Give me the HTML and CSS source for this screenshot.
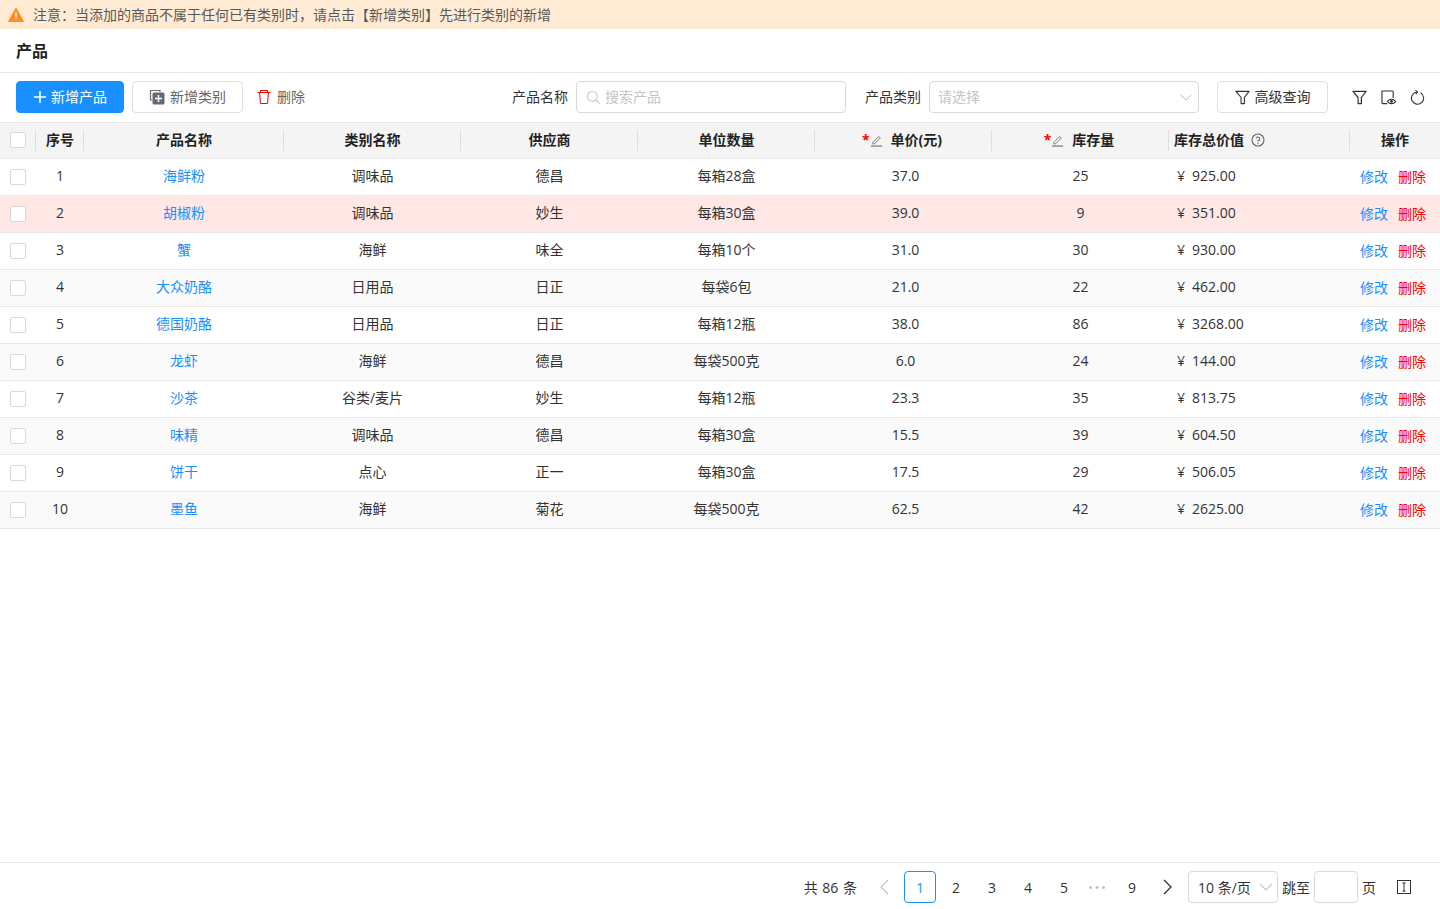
FILE: index.html
```html
<!DOCTYPE html>
<html lang="zh-CN">
<head>
    <meta charset="UTF-8">
    <meta name="viewport" content="width=device-width, initial-scale=1.0">
    <title>产品</title>
    <link rel="stylesheet" href="styles.css">
</head>
<body>
    <div class="notice">
        <svg class="notice-icon" viewBox="0 0 16 16" width="16" height="16"><path d="M8 1.2 15.4 14.4H.6Z" fill="#ff8c1a" stroke="#ff8c1a" stroke-linejoin="round"/><path d="M8 5.6v4.6M8 11.4v1.2" stroke="#fff" stroke-width="1.4"/></svg>
        <span>注意：当添加的商品不属于任何已有类别时，请点击【新增类别】先进行类别的新增</span>
    </div>
    <div class="title-bar">产品</div>
    <div class="toolbar">
        <button class="btn btn-primary"><svg viewBox="0 0 14 14" width="14" height="14"><path d="M7 1v12M1 7h12" stroke="#fff" stroke-width="1.6"/></svg>新增产品</button>
        <button class="btn btn-default"><svg viewBox="0 0 16 16" width="16" height="16"><path d="M11 3V1.500H1.500v9.500H3" fill="none" stroke="#666b73" stroke-width="1.2"/><rect x="3.500" y="3.500" width="12" height="12" rx="1.500" fill="#666b73"/><path d="M9.500 6v7M6 9.500h7" stroke="#fff" stroke-width="1.500"/></svg>新增类别</button>
        <button class="btn btn-text"><svg viewBox="0 0 14 16" width="14" height="16"><path d="M.5 3.500h13M2.500 3.500l1 11h7l1-11M3.500 3.500V1.500h7v2" fill="none" stroke="#f00" stroke-width="1"/></svg>删除</button>
        <label class="field-label field-name">产品名称</label>
        <div class="input search-input">
            <svg viewBox="0 0 16 16" width="15" height="15"><circle cx="6.800" cy="6.800" r="5.200" fill="none" stroke="#c4c4c4" stroke-width="1.100"/><path d="m10.600 10.600 4 4" stroke="#c4c4c4" stroke-width="1.100"/></svg>
            <span>搜索产品</span>
        </div>
        <label class="field-label field-type">产品类别</label>
        <div class="input select-input">
            <span>请选择</span>
            <svg viewBox="0 0 14 8" width="12" height="7"><path d="m1 1 6 6 6-6" fill="none" stroke="#c9c9c9" stroke-width="1.200"/></svg>
        </div>
        <button class="btn btn-default btn-query"><svg viewBox="0 0 16 16" width="15" height="15"><path d="M1 1.500h14L10 8v6.500H6.500V8Z" fill="none" stroke="#333" stroke-width="1.200" stroke-linejoin="round"/></svg>高级查询</button>
        <div class="tool-icons">
            <svg viewBox="0 0 16 16" width="15" height="15"><path d="M1 1.500h14L10 8v6.500H6.500V8Z" fill="none" stroke="#333" stroke-width="1.300" stroke-linejoin="round"/></svg>
            <svg viewBox="0 0 16 16" width="15" height="15"><path d="M6.500 14.500H2a1 1 0 0 1-1-1V1h11a1 1 0 0 1 1 1v6.500" fill="none" stroke="#333" stroke-width="1.200"/><path d="M6.800 12.300c2.400-3.200 6.400-3.200 8.800 0-2.400 3-6.400 3-8.800 0Z" fill="none" stroke="#333" stroke-width="1.200"/><circle cx="11.200" cy="12.200" r="1.500" fill="#333"/></svg>
            <svg viewBox="0 0 16 16" width="15" height="15"><path d="M11.200 3A6.500 6.500 0 1 1 7.500 2.200" fill="none" stroke="#333" stroke-width="1.200"/><path d="M5.800 .3 8 2.200 6 4.300" fill="none" stroke="#333" stroke-width="1.200"/></svg>
        </div>
    </div>
    <div class="table">
        <div class="row head-row">
            <div class="cell col-check"><span class="checkbox"></span></div>
            <div class="cell col-no">序号</div>
            <div class="cell col-name">产品名称</div>
            <div class="cell col-md">类别名称</div>
            <div class="cell col-md">供应商</div>
            <div class="cell col-md">单位数量</div>
            <div class="cell col-md col-edit"><span class="edit-mark">*<svg viewBox="0 0 14 14" width="13" height="13"><path d="M3 9.200 9.400 2.600l1.800 1.700-6.500 6.500H3Z" fill="none" stroke="#777" stroke-width="1"/><path d="M1 13h12" stroke="#777" stroke-width="1.300"/></svg></span>单价(元)</div>
            <div class="cell col-md col-edit"><span class="edit-mark">*<svg viewBox="0 0 14 14" width="13" height="13"><path d="M3 9.200 9.400 2.600l1.800 1.700-6.500 6.500H3Z" fill="none" stroke="#777" stroke-width="1"/><path d="M1 13h12" stroke="#777" stroke-width="1.300"/></svg></span>库存量</div>
            <div class="cell col-total">库存总价值<svg class="help-icon" viewBox="0 0 14 14" width="14" height="14"><circle cx="7" cy="7" r="6" fill="none" stroke="#666" stroke-width="1.100"/><path d="M5.200 5.500A1.800 1.800 0 1 1 7 7.600v1" fill="none" stroke="#666" stroke-width="1.100"/><circle cx="7" cy="10.300" r=".7" fill="#666"/></svg></div>
            <div class="cell col-action">操作</div>
        </div>
        <div id="rows"></div>
    </div>
    <div class="pager">
        <span class="total">共 86 条</span>
        <svg class="arrow" viewBox="0 0 10 16" width="10" height="16"><path d="M9 1 2 8l7 7" fill="none" stroke="#c4c4c4" stroke-width="1.300"/></svg>
        <span class="page current">1</span>
        <span class="page">2</span>
        <span class="page">3</span>
        <span class="page">4</span>
        <span class="page">5</span>
        <span class="dots">•••</span>
        <span class="page">9</span>
        <svg class="arrow arrow-next" viewBox="0 0 10 16" width="10" height="16"><path d="m1 1 7 7-7 7" fill="none" stroke="#333" stroke-width="1.300"/></svg>
        <div class="size-select">10 条/页<svg viewBox="0 0 14 8" width="14" height="8"><path d="m1 1 6 6 6-6" fill="none" stroke="#c4c4c4" stroke-width="1.100"/></svg></div>
        <span class="jump">跳至</span>
        <div class="jump-input"></div>
        <span class="jump-unit">页</span>
        <svg class="density" viewBox="0 0 14 14" width="14" height="14"><rect x=".5" y=".5" width="13" height="13" fill="none" stroke="#333"/><path d="M7 2.500v9M5.500 3h3M5.500 11h3" fill="none" stroke="#333"/></svg>
    </div>
    <script>
        const products = [
            [1, '海鲜粉', '调味品', '德昌', '每箱28盒', '37.0', 25, '925.00', ''],
            [2, '胡椒粉', '调味品', '妙生', '每箱30盒', '39.0', 9, '351.00', 'warn'],
            [3, '蟹', '海鲜', '味全', '每箱10个', '31.0', 30, '930.00', ''],
            [4, '大众奶酪', '日用品', '日正', '每袋6包', '21.0', 22, '462.00', 'alt'],
            [5, '德国奶酪', '日用品', '日正', '每箱12瓶', '38.0', 86, '3268.00', ''],
            [6, '龙虾', '海鲜', '德昌', '每袋500克', '6.0', 24, '144.00', 'alt'],
            [7, '沙茶', '谷类/麦片', '妙生', '每箱12瓶', '23.3', 35, '813.75', ''],
            [8, '味精', '调味品', '德昌', '每箱30盒', '15.5', 39, '604.50', 'alt'],
            [9, '饼干', '点心', '正一', '每箱30盒', '17.5', 29, '506.05', ''],
            [10, '墨鱼', '海鲜', '菊花', '每袋500克', '62.5', 42, '2625.00', 'alt']
        ];
        document.getElementById('rows').innerHTML = products.map(p => `
            <div class="row ${p[8]}">
                <div class="cell col-check"><span class="checkbox"></span></div>
                <div class="cell col-no">${p[0]}</div>
                <div class="cell col-name"><a href="#">${p[1]}</a></div>
                <div class="cell col-md">${p[2]}</div>
                <div class="cell col-md">${p[3]}</div>
                <div class="cell col-md">${p[4]}</div>
                <div class="cell col-md col-price">${p[5]}</div>
                <div class="cell col-md">${p[6]}</div>
                <div class="cell col-total"><span class="yen">¥</span>${p[7]}</div>
                <div class="cell col-action"><a href="#">修改</a><a href="#" class="del">删除</a></div>
            </div>`).join('');
    </script>
</body>
</html>
```

FILE: styles.css
```css
* {
    box-sizing: border-box;
}
body {
    font-family: "Open Sans", "Noto Sans CJK SC", sans-serif;
    font-size: 14px;
    color: #333;
    background-color: #fff;
    margin: 0;
    height: 909px;
    display: flex;
    flex-direction: column;
    overflow: hidden;
}
.notice {
    display: flex;
    align-items: center;
    height: 29px;
    padding-left: 8px;
    background-color: #ffebd4;
    color: #595959;
    font-size: 14px;
}
.notice span {
    padding-bottom: 2px;
}
.notice-icon {
    margin-right: 9px;
}
.title-bar {
    height: 44px;
    padding-left: 16px;
    line-height: 44px;
    font-size: 16px;
    font-weight: 700;
    color: #222;
    border-bottom: 1px solid #e8e8e8;
}
.toolbar {
    display: flex;
    align-items: center;
    height: 49px;
    padding: 0 0 1px 16px;
}
.btn {
    display: flex;
    align-items: center;
    justify-content: center;
    height: 32px;
    padding: 0 0 2px;
    border-radius: 4px;
    border: 1px solid #dcdfe6;
    background-color: #fff;
    font-family: inherit;
    font-size: 14px;
    color: #666;
}
.btn svg {
    margin-top: 2px;
}
.btn-primary {
    width: 108px;
    background-color: #1890ff;
    border-color: #1890ff;
    color: #fff;
    gap: 4px;
}
.btn-default {
    width: 111px;
    margin-left: 8px;
    gap: 5px;
}
.btn-text {
    margin-left: 14px;
    border: none;
    gap: 6px;
}
.field-label {
    color: #333;
    font-size: 14px;
    padding-bottom: 2px;
}
.field-name {
    margin-left: auto;
}
.field-type {
    margin-left: 19px;
}
.input {
    display: flex;
    align-items: center;
    height: 32px;
    margin-left: 8px;
    padding-bottom: 2px;
    border: 1px solid #d9d9d9;
    border-radius: 4px;
    color: #c4c4c4;
    font-size: 14px;
}
.input svg {
    margin-top: 2px;
}
.search-input {
    width: 270px;
    padding-left: 9px;
    gap: 4px;
}
.select-input {
    width: 270px;
    padding-left: 8px;
    padding-right: 6px;
    justify-content: space-between;
}
.btn-query {
    margin-left: 18px;
    color: #333;
}
.tool-icons {
    display: flex;
    align-items: center;
    gap: 14px;
    margin: 0 15px 0 24px;
}
.table {
    flex: 1;
}
.row {
    display: flex;
    height: 37px;
    border-bottom: 1px solid #e8e8e8;
}
.row.warn {
    background-color: #fee7e5;
}
.row.alt {
    background-color: #fafafa;
}
.cell {
    display: flex;
    align-items: center;
    justify-content: center;
    position: relative;
    flex-shrink: 0;
    padding-bottom: 4px;
    color: #333;
}
.cell.col-check {
    padding-bottom: 0;
}
.col-check {
    width: 36px;
}
.col-no {
    width: 48px;
}
.col-name {
    width: 200px;
}
.col-md {
    width: 177px;
}
.col-price {
    padding-left: 4px;
}
.col-total {
    width: 181px;
    justify-content: flex-start;
    padding-left: 8px;
}
.col-action {
    width: 90px;
}
.head-row {
    background-color: #f4f4f4;
    border-top: 1px solid #e8e8e8;
    border-bottom: 1px solid #e8e8e8;
}
.head-row .cell {
    font-weight: 700;
    font-size: 14px;
    color: #222;
    padding-bottom: 3px;
}
.head-row .cell.col-check {
    padding-bottom: 1px;
}
.head-row .col-total {
    padding-left: 5px;
}
.head-row .col-edit {
    padding-right: 3px;
}
.head-row .cell:not(.col-action)::after {
    content: "";
    position: absolute;
    right: 0;
    top: 7px;
    bottom: 7px;
    width: 1px;
    background-color: #dedede;
}
.checkbox {
    display: block;
    width: 16px;
    height: 16px;
    background-color: #fff;
    border: 1px solid #d9d9d9;
    border-radius: 2px;
}
.edit-mark {
    display: flex;
    align-items: center;
    margin-right: 8px;
    color: #f00;
}
.edit-mark svg {
    margin-top: 2px;
}
.help-icon {
    margin: 2px 0 0 7px;
}
a {
    color: #1890ff;
    text-decoration: none;
}
.yen {
    margin-right: 7px;
}
.row:not(.head-row) .col-action {
    padding: 0 4px 2px 0;
}
.col-action a {
    font-size: 14px;
    margin: 0 5px;
}
.col-action a.del {
    color: #f00;
}
.pager {
    display: flex;
    align-items: center;
    height: 47px;
    border-top: 1px solid #e8e8e8;
    padding: 2px 29px 0 0;
    justify-content: flex-end;
    font-size: 14px;
}
.total {
    margin-right: 22px;
    word-spacing: 1px;
}
.arrow {
    margin-right: 15px;
}
.arrow-next {
    margin: 0 15px 0 11px;
}
.page {
    width: 32px;
    height: 32px;
    margin-right: 4px;
    line-height: 33px;
    text-align: center;
    font-size: 14px;
}
.page.current {
    color: #1890ff;
    border: 1px solid #1890ff;
    border-radius: 4px;
    line-height: 31px;
}
.dots {
    width: 28px;
    margin-right: 4px;
    text-align: center;
    color: #bbb;
    font-size: 12px;
    letter-spacing: 2px;
}
.size-select {
    display: flex;
    align-items: center;
    justify-content: space-between;
    width: 90px;
    height: 32px;
    padding: 0 4px 0 9px;
    border: 1px solid #d9d9d9;
    border-radius: 4px;
    font-size: 14px;
}
.jump {
    margin-left: 4px;
}
.jump-input {
    width: 44px;
    height: 32px;
    margin-left: 4px;
    border: 1px solid #d9d9d9;
    border-radius: 4px;
}
.jump-unit {
    margin-left: 4px;
}
.density {
    margin-left: 21px;
}
```
